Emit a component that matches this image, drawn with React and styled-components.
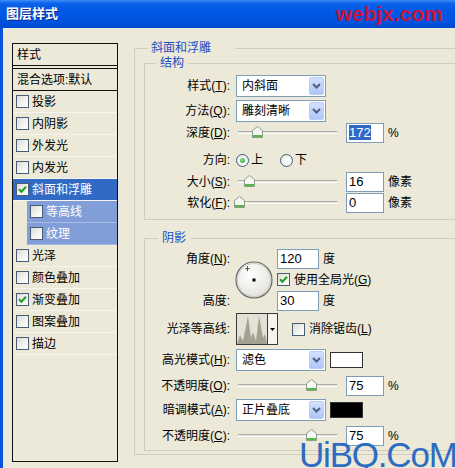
import React from "react";
import styled, { createGlobalStyle } from "styled-components";

const layers = [
  { name: "投影" },
  { name: "内阴影" },
  { name: "外发光" },
  { name: "内发光" },
  { name: "斜面和浮雕", checked: true, selected: true },
  { name: "等高线", sub: true },
  { name: "纹理", sub: true },
  { name: "光泽" },
  { name: "颜色叠加" },
  { name: "渐变叠加", checked: true },
  { name: "图案叠加" },
  { name: "描边" },
];

const Check = ({ checked }) => (
  <CheckBox>
    {checked && (
      <svg width="11" height="11" viewBox="0 0 11 11">
        <path d="M2 5.2 L4.4 7.8 L9 2.8" stroke="#21A121" strokeWidth="2" fill="none" />
      </svg>
    )}
  </CheckBox>
);

const Combo = ({ value }) => (
  <Select>
    <span>{value}</span>
    <ComboButton>
      <svg width="9" height="6" viewBox="0 0 9 6">
        <path d="M1 1 L4.5 4.5 L8 1" stroke="#4D6185" strokeWidth="2" fill="none" />
      </svg>
    </ComboButton>
  </Select>
);

const Slider = ({ pct }) => (
  <SliderBox>
    <Track />
    <Thumb style={{ left: 3 + (pct / 100) * 96 - 5.5 }}>
      <svg width="11" height="12" viewBox="0 0 11 12">
        <path d="M0.5 4.5 L5.5 0.5 L10.5 4.5 V11.5 H0.5 Z" fill="#F6F6F2" stroke="#8C9C88" />
        <rect x="1" y="9" width="9" height="2" fill="#55B84A" />
      </svg>
    </Thumb>
  </SliderBox>
);

const Dial = () => (
  <svg width="38" height="38" viewBox="0 0 38 38">
    <defs>
      <radialGradient id="dialFill" cx="40%" cy="35%" r="70%">
        <stop offset="0" stopColor="#ffffff" />
        <stop offset="1" stopColor="#e2e1da" />
      </radialGradient>
    </defs>
    <circle cx="19" cy="19" r="18" fill="url(#dialFill)" stroke="#6b6b6b" strokeWidth="1.2" />
    <circle cx="19" cy="19" r="16.5" fill="none" stroke="#c4c3bc" strokeWidth="0.8" />
    <path d="M12.5 5.2 V10.2 M10 7.7 H15" stroke="#333" strokeWidth="0.8" />
    <rect x="17.5" y="17.5" width="3" height="3" fill="#000" />
  </svg>
);

const Contour = () => (
  <ContourBox>
    <ContourArt>
      <svg width="30" height="30" viewBox="0 0 30 30">
        <path
          d="M0 30 L3 21 L6 27 L11 2 L14 24 L16 18 L19 27 L22 2 L26 24 L28 20 L30 30 Z"
          fill="#a3a292"
        />
      </svg>
    </ContourArt>
    <ContourArrow>
      <svg width="5" height="3" viewBox="0 0 5 3">
        <path d="M0 0 H5 L2.5 3 Z" fill="#000" />
      </svg>
    </ContourArrow>
  </ContourBox>
);

const Key = ({ text, k }) => (
  <>
    {text}(<u>{k}</u>):
  </>
);

const App = () => {
  return (
    <Window>
      <GlobalStyle />
      <TitleBar>
        <Title>图层样式</Title>
        <Brand>webjx.com</Brand>
      </TitleBar>

      <Body>
        {/* left style list */}
        <LeftCol>
          <StyleList>
            <ListHeader>样式</ListHeader>
            <BlendRow>混合选项:默认</BlendRow>
            {layers.map((l) => (
              <ListItem key={l.name} $selected={l.selected} $sub={l.sub}>
                <Check checked={l.checked} />
                {l.name}
              </ListItem>
            ))}
          </StyleList>
        </LeftCol>

        {/* right settings */}
        <RightCol>
          <Outer>
            <OuterLegend>斜面和浮雕</OuterLegend>

            <Group $pt={5} $pb={6}>
              <Legend $ml={11}>结构</Legend>
              <Row>
                <Label><Key text="样式" k="T" /></Label>
                <Combo value="内斜面" />
              </Row>
              <Row $mt={3}>
                <Label><Key text="方法" k="Q" /></Label>
                <Combo value="雕刻清晰" />
              </Row>
              <Row $h={21}>
                <Label><Key text="深度" k="D" /></Label>
                <Slider pct={19} />
                <Field><Selected>172</Selected></Field>
                <Unit>%</Unit>
              </Row>
              <Row $mt={6}>
                <Label>方向:</Label>
                <RadioOption>
                  <Radio $on />上
                </RadioOption>
                <RadioOption $ml={17}>
                  <Radio />下
                </RadioOption>
              </Row>
              <Row $h={21}>
                <Label><Key text="大小" k="S" /></Label>
                <Slider pct={10.5} />
                <Field>16</Field>
                <Unit>像素</Unit>
              </Row>
              <Row $h={21}>
                <Label><Key text="软化" k="F" /></Label>
                <Slider pct={0} />
                <Field>0</Field>
                <Unit>像素</Unit>
              </Row>
            </Group>

            <Group $mt={11} $pt={3} $pb={4}>
              <Legend $ml={13}>阴影</Legend>
              <AngleGrid>
                <GridLabel $row={1}><Key text="角度" k="N" /></GridLabel>
                <DialCell>
                  <Dial />
                </DialCell>
                <GridItem $row={1}>
                  <Field $w={42}>120</Field>
                  <Unit>度</Unit>
                </GridItem>
                <GridItem $row={2}>
                  <Check checked />
                  <CheckText>使用全局光(<u>G</u>)</CheckText>
                </GridItem>
                <GridLabel $row={3}>高度:</GridLabel>
                <GridItem $row={3}>
                  <Field $w={42}>30</Field>
                  <Unit>度</Unit>
                </GridItem>
              </AngleGrid>
              <Row $h={32} $mt={2}>
                <Label>光泽等高线:</Label>
                <Contour />
                <Option>
                  <Check />
                  <CheckText>消除锯齿(<u>L</u>)</CheckText>
                </Option>
              </Row>
              <Row $mt={4}>
                <Label><Key text="高光模式" k="H" /></Label>
                <Combo value="滤色" />
                <Swatch $color="#ffffff" />
              </Row>
              <Row $h={21} $mt={4}>
                <Label><Key text="不透明度" k="O" /></Label>
                <Slider pct={75} />
                <Field>75</Field>
                <Unit>%</Unit>
              </Row>
              <Row $mt={3}>
                <Label><Key text="暗调模式" k="A" /></Label>
                <Combo value="正片叠底" />
                <Swatch $color="#000000" />
              </Row>
              <Row $h={21} $mt={4}>
                <Label><Key text="不透明度" k="C" /></Label>
                <Slider pct={75} />
                <Field>75</Field>
                <Unit>%</Unit>
              </Row>
            </Group>
          </Outer>
        </RightCol>
      </Body>

      <Watermark>UiBQ.CoM</Watermark>
    </Window>
  );
};

export default App;

// Styled Components
const GlobalStyle = createGlobalStyle`
  html, body {
    margin: 0;
    padding: 0;
    background: #ece9d8;
    overflow: hidden;
  }
  * {
    box-sizing: border-box;
  }
`;

const Window = styled.div`
  position: relative;
  width: 455px;
  height: 468px;
  overflow: hidden;
  background: #ece9d8;
  font-family: "Liberation Sans", "Noto Sans CJK SC", sans-serif;
  font-size: 12px;
  line-height: 14px;
  color: #000;
`;

const TitleBar = styled.div`
  display: flex;
  align-items: center;
  height: 28px;
  padding: 0 12px 0 6px;
  background: linear-gradient(
    180deg,
    #3d8ff5 0%,
    #0c62ea 12%,
    #0058e6 40%,
    #0054e0 75%,
    #0049cf 100%
  );
`;

const Title = styled.div`
  color: #fff;
  font-size: 13px;
  font-weight: bold;
  text-shadow: 1px 1px 0 #0a2a8a;
`;

const Brand = styled.div`
  margin-left: auto;
  color: #c8143c;
  font-size: 21px;
  font-weight: bold;
  line-height: 24px;
`;

const Body = styled.div`
  display: flex;
  height: 440px;
  border-left: 3px solid #0d52dc;
`;

const LeftCol = styled.div`
  flex: none;
  padding: 15px 0 0 9px;
`;

const StyleList = styled.div`
  width: 106px;
  height: 419px;
  border: 1px solid #111;
`;

const ListHeader = styled.div`
  display: flex;
  align-items: center;
  height: 22px;
  padding-left: 4px;
  border-bottom: 1px solid #111;
  margin-bottom: 2px;
`;

const BlendRow = styled.div`
  display: flex;
  align-items: center;
  height: 23px;
  padding-left: 4px;
  border-top: 1px solid #111;
  border-bottom: 1px solid #111;
`;

const ListItem = styled.div`
  display: flex;
  align-items: center;
  gap: 3px;
  height: 22px;
  margin-left: ${(p) => (p.$sub ? 14 : 0)}px;
  padding-left: ${(p) => (p.$sub ? 3 : 3)}px;
  border-bottom: 1px solid ${(p) => (p.$sub ? "#a9bce6" : "#f6f5ef")};
  background: ${(p) => (p.$selected ? "#316ac5" : p.$sub ? "#829ed8" : "transparent")};
  color: ${(p) => (p.$selected || p.$sub ? "#fff" : "#000")};
`;

const CheckBox = styled.span`
  flex: none;
  display: inline-flex;
  align-items: center;
  justify-content: center;
  width: 13px;
  height: 13px;
  border: 1px solid #4a5d74;
  background: linear-gradient(135deg, #dcdcd6 0%, #f4f4f1 60%, #ffffff 100%);
`;

const RightCol = styled.div`
  flex: none;
  margin-left: 16px;
  padding-top: 13px;
`;

const Outer = styled.fieldset`
  width: 350px;
  min-width: 0;
  margin: 0;
  padding: 1px 0 3px 9px;
  border: 1px solid #cfcdbd;
`;

const OuterLegend = styled.legend`
  margin-left: 4px;
  padding: 0 24px 0 3px;
  line-height: 14px;
  color: #1c4fc2;
`;

const Group = styled.fieldset`
  width: 330px;
  min-width: 0;
  margin: ${(p) => p.$mt || 0}px 0 0 0;
  padding: ${(p) => p.$pt}px 0 ${(p) => p.$pb}px 0;
  border: 1px solid #cfcdbd;
`;

const Legend = styled.legend`
  margin-left: ${(p) => p.$ml}px;
  padding: 0 4px;
  line-height: 14px;
  color: #1c4fc2;
`;

const Row = styled.div`
  display: flex;
  align-items: center;
  height: ${(p) => p.$h || 22}px;
  margin-top: ${(p) => p.$mt || 0}px;
`;

const Label = styled.span`
  flex: none;
  width: 85px;
  margin-right: 6px;
  text-align: right;
  white-space: nowrap;
`;

const Select = styled.div`
  flex: none;
  display: flex;
  align-items: center;
  width: 90px;
  height: 22px;
  padding: 0 1px 0 5px;
  border: 1px solid #7f9db9;
  background: #fff;
`;

const ComboButton = styled.span`
  display: flex;
  align-items: center;
  justify-content: center;
  width: 15px;
  height: 18px;
  margin-left: auto;
  border: 1px solid #bccdf3;
  border-radius: 2px;
  background: linear-gradient(180deg, #d4e0fd 0%, #bcd0fb 60%, #aec6f8 100%);
`;

const SliderBox = styled.div`
  position: relative;
  flex: none;
  width: 103px;
  height: 100%;
`;

const Track = styled.div`
  position: absolute;
  left: 2px;
  right: 2px;
  top: 9px;
  height: 3px;
  border-top: 1px solid #aeada4;
  border-bottom: 1px solid #ffffff;
  background: #e6e5dc;
`;

const Thumb = styled.div`
  position: absolute;
  top: 4px;
  width: 11px;
  height: 12px;
  display: flex;
`;

const Field = styled.div`
  flex: none;
  width: ${(p) => p.$w || 38}px;
  height: 20px;
  margin-left: ${(p) => (p.$w ? 0 : 7)}px;
  padding-left: 2px;
  border: 1px solid #7f9db9;
  background: #fff;
  font-family: "Liberation Sans", sans-serif;
  font-size: 13px;
  line-height: 18px;
`;

const Selected = styled.span`
  background: #316ac5;
  color: #fff;
`;

const Unit = styled.span`
  margin-left: 4px;
  white-space: nowrap;
`;

const RadioOption = styled.span`
  display: flex;
  align-items: center;
  gap: 2px;
  margin-left: ${(p) => p.$ml || 0}px;
`;

const Radio = styled.span`
  position: relative;
  width: 13px;
  height: 13px;
  border-radius: 50%;
  border: 1px solid #3d5a80;
  background: radial-gradient(circle at 65% 65%, #ffffff 0%, #e6e6e0 100%);

  &::after {
    content: "";
    display: ${(p) => (p.$on ? "block" : "none")};
    position: absolute;
    left: 3px;
    top: 3px;
    width: 5px;
    height: 5px;
    border-radius: 50%;
    background: radial-gradient(circle at 40% 40%, #8fe08a 0%, #21a121 100%);
  }
`;

const AngleGrid = styled.div`
  display: grid;
  grid-template-columns: 85px 47px auto;
  grid-template-rows: repeat(3, 21px);
`;

const GridLabel = styled.span`
  grid-column: 1;
  grid-row: ${(p) => p.$row};
  align-self: center;
  text-align: right;
  white-space: nowrap;
`;

const DialCell = styled.div`
  grid-column: 2;
  grid-row: 1 / 4;
  display: flex;
  align-items: center;
  justify-content: center;
`;

const GridItem = styled.div`
  grid-column: 3;
  grid-row: ${(p) => p.$row};
  display: flex;
  align-items: center;
`;

const CheckText = styled.span`
  margin-left: 4px;
  white-space: nowrap;
`;

const Option = styled.span`
  display: flex;
  align-items: center;
  margin-left: 14px;
`;

const ContourBox = styled.div`
  flex: none;
  display: flex;
  width: 42px;
  height: 32px;
  border: 1px solid #3a3a3a;
  background: #e3e1d5;
`;

const ContourArt = styled.div`
  display: flex;
  align-items: flex-end;
  width: 30px;
`;

const ContourArrow = styled.div`
  display: flex;
  align-items: center;
  justify-content: center;
  flex: 1;
  border-left: 1px solid #3a3a3a;
  background: #f4f3ee;
`;

const Swatch = styled.span`
  flex: none;
  width: 33px;
  height: 16px;
  margin-left: 4px;
  border: 1px solid #333;
  background: ${(p) => p.$color};
`;

const Watermark = styled.div`
  position: absolute;
  left: 299px;
  top: 437px;
  color: #2d6cc2;
  font-family: "Liberation Sans", sans-serif;
  font-size: 35px;
  line-height: 35px;
  letter-spacing: -1.2px;
  white-space: nowrap;
`;
